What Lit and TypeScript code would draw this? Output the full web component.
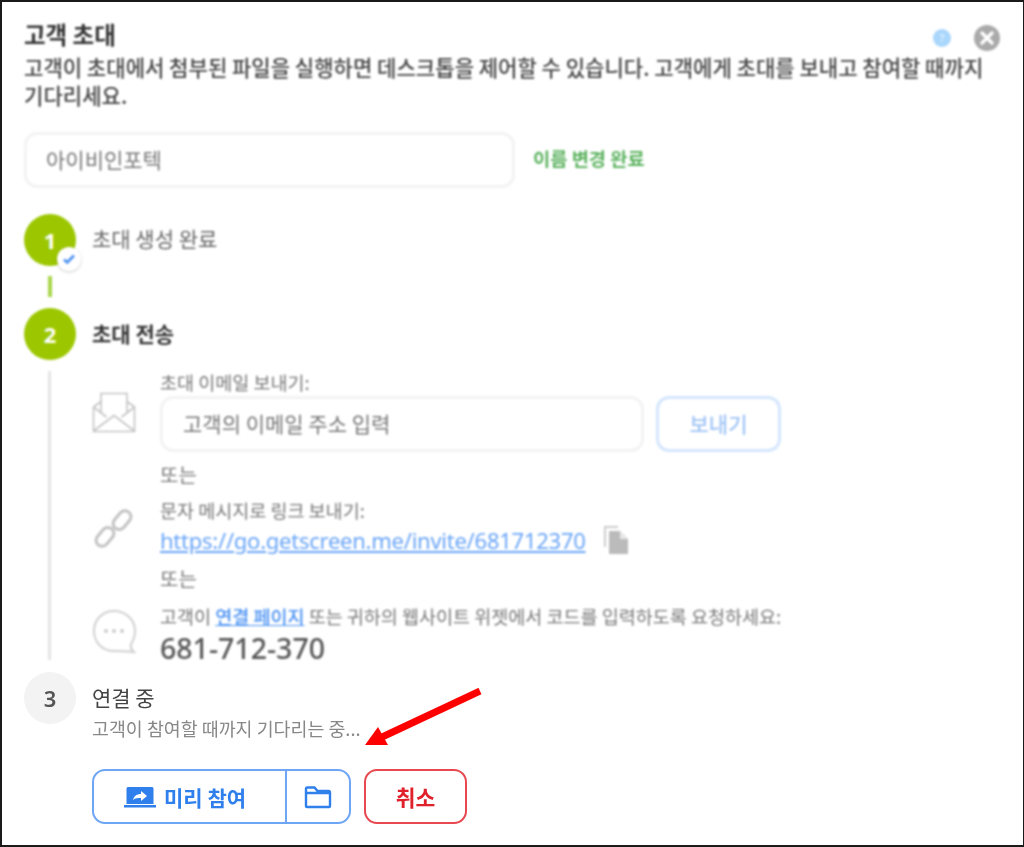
import { LitElement, html, css } from "lit";
import { customElement } from "lit/decorators.js";

@customElement("app-root")
export class AppRoot extends LitElement {
  static styles = css`
    :host { display: block; width: 1024px; height: 847px; font-family: "Noto Sans CJK KR", "Noto Sans", sans-serif; background: #fff; }
    .frame { position: relative; box-sizing: border-box; width: 1024px; height: 847px; border: 2px solid #1a1a1a; border-right-width: 1px; background: #fff; overflow: hidden; padding: 0 22px; }
    .soft { filter: blur(0.9px); }
    .lite { filter: blur(0.4px); }
    .top { height: 130px; }
    .title { font-size: 23.5px; font-weight: 700; color: #333; line-height: 28px; padding-top: 18px; }
    .desc { font-size: 21.07px; font-weight: 500; color: #444; line-height: 28px; margin-top: 5px; width: 965px; word-break: keep-all; }
    .help { position: absolute; left: 909px; top: 27px; width: 18px; height: 18px; border-radius: 50%; background: #a9d6fb; color: #d9eeff; font: 700 11px/18px "Noto Sans", sans-serif; text-align: center; }
    .close { position: absolute; left: 950px; top: 23px; width: 26px; height: 26px; }
    .name-row { display: flex; align-items: center; gap: 18px; }
    .field { box-sizing: border-box; border: 3px solid #f3f3f3; border-radius: 13px; display: flex; align-items: center; color: #777; font-weight: 400; padding-bottom: 2px; }
    .name { width: 491px; height: 56px; padding-left: 19px; font-size: 21px; }
    .saved { color: #5cb25f; font-size: 18.7px; font-weight: 700; margin-top: -5px; }
    .step { display: flex; gap: 16px; align-items: center; }
    .num { width: 52px; height: 52px; flex: none; border-radius: 50%; background: #9cc700; color: #fff; font: 700 22px/52px "Noto Sans", sans-serif; text-align: center; position: relative; }
    .num.off { background: #f3f3f3; color: #555; font-weight: 600; }
    .s1 { margin-top: 26px; }
    .s1 .label { color: #666; font-size: 21px; margin-top: -5px; }
    .badge { position: absolute; left: 33px; top: 33px; width: 24px; height: 24px; border-radius: 50%; background: #fff; box-shadow: 0 1px 3px #0003; display: flex; align-items: center; justify-content: center; }
    .link-short { width: 4px; height: 21px; background: #a9d64a; margin: 10px 0 11px 24px; }
    .s2 .label { font-weight: 700; color: #333; font-size: 21px; margin-top: -2px; }
    .body { display: flex; margin-top: 11px; }
    .rail { width: 3px; height: 289px; background: #e4e4e4; margin-left: 24px; flex: none; }
    .content { margin-left: 41px; margin-top: -1px; width: 720px; }
    .row { display: flex; gap: 24px; }
    .ico { width: 44px; flex: none; }
    .small { font-size: 18.5px; color: #777; line-height: 26px; margin-top: -1px; }
    .small.tight { line-height: 24px; }
    .email-line { display: flex; gap: 12px; margin-top: 1px; }
    .email { width: 484px; height: 56px; padding-left: 20px; font-size: 21px; }
    .send { box-sizing: border-box; width: 125px; height: 56px; border: 3px solid #d4e6fd; border-radius: 13px; color: #9fc3f5; font-size: 21px; font-weight: 500; display: flex; align-items: center; justify-content: center; padding-bottom: 2px; }
    .or { font-size: 20px; color: #777; line-height: 24px; margin-left: 68px; }
    .url-line { display: flex; align-items: center; gap: 17px; margin-top: 1px; }
    .url { font: 400 22px/34px "Noto Sans", sans-serif; letter-spacing: -0.25px; color: #69a5f7; text-decoration: underline; }
    .inline-link { color: #4a92f3; text-decoration: underline; font-weight: 500; }
    .code { font: 500 28.5px/36px "Noto Sans", sans-serif; color: #555; margin-top: 2px; }
    .s3 { align-items: flex-start; margin-top: 6px; }
    .s3 .label { color: #444; font-size: 21px; line-height: 28px; margin-top: 11px; }
    .s3 .sub { color: #888; font-size: 18.4px; line-height: 24px; margin-top: 5px; }
    .actions { display: flex; gap: 13px; margin: 29px 0 0 68px; }
    .group { box-sizing: border-box; width: 259px; height: 55px; border: 2px solid #6ea6f5; border-radius: 13px; display: flex; color: #2f80ed; }
    .join { box-sizing: border-box; width: 193px; padding-right: 9px; border-right: 2px solid #6ea6f5; display: flex; align-items: center; justify-content: center; gap: 8px; font-size: 21px; font-weight: 700; }
    .folder { flex: 1; display: flex; align-items: center; justify-content: center; }
    .cancel { box-sizing: border-box; width: 103px; height: 55px; border: 2px solid #e8484f; border-radius: 13px; color: #e0202a; font-size: 21.5px; font-weight: 700; display: flex; align-items: center; justify-content: center; }
    .arrow { position: absolute; left: 362px; top: 686px; }
  `;

  render() {
    return html`<div class="frame">
      <div class="soft">
        <div class="top">
          <div class="title">고객 초대</div>
          <div class="desc">고객이 초대에서 첨부된 파일을 실행하면 데스크톱을 제어할 수 있습니다. 고객에게 초대를 보내고 참여할 때까지 기다리세요.</div>
        </div>
        <div class="help">?</div>
        <svg class="close" viewBox="0 0 26 26"><circle cx="13" cy="13" r="13" fill="#aaa"/><path d="M8 8l10 10M18 8L8 18" stroke="#fff" stroke-width="3.4" stroke-linecap="round"/></svg>
        <div class="name-row">
          <div class="field name">아이비인포텍</div>
          <div class="saved">이름 변경 완료</div>
        </div>
        <div class="step s1">
          <div class="num">1
            <span class="badge"><svg width="14" height="12" viewBox="0 0 14 12"><path d="M2 6.5l3.2 3L12 2.5" fill="none" stroke="#4a8ff0" stroke-width="2.6"/></svg></span>
          </div>
          <div class="label">초대 생성 완료</div>
        </div>
        <div class="link-short"></div>
        <div class="step s2">
          <div class="num">2</div>
          <div class="label">초대 전송</div>
        </div>
        <div class="body">
          <div class="rail"></div>
          <div class="content">
            <div class="row">
              <div class="ico">
                <svg width="44" height="44" viewBox="0 0 44 44" style="margin-top:20px" fill="none" stroke="#c4c4c4" stroke-width="1.6"><path d="M1.5 17v24.5h41V17L35 11.500M1.5 17L9 11.500M1.5 41L22 25.500l20.500 15.500M1.500 17l13 10M42.500 17l-13 10M9 22V3.500h26V22"/></svg>
              </div>
              <div>
                <div class="small">초대 이메일 보내기:</div>
                <div class="email-line">
                  <div class="field email">고객의 이메일 주소 입력</div>
                  <div class="send">보내기</div>
                </div>
              </div>
            </div>
            <div class="or" style="margin-top:11px">또는</div>
            <div class="row" style="margin-top:12px">
              <div class="ico">
                <svg width="44" height="46" viewBox="0 0 44 46" style="margin-top:6px" fill="none" stroke="#c2c2c2" stroke-width="3"><rect x="-9" y="-6" width="21" height="12" rx="6" transform="translate(12 33) rotate(-50)"/><rect x="-12" y="-6" width="21" height="12" rx="6" transform="translate(31 14) rotate(-50)"/></svg>
              </div>
              <div>
                <div class="small tight">문자 메시지로 링크 보내기:</div>
                <div class="url-line">
                  <span class="url">https://go.getscreen.me/invite/681712370</span>
                  <svg width="27" height="30" viewBox="0 0 27 30"><path d="M2 22V2h13" fill="none" stroke="#ccc" stroke-width="2"/><path d="M6 6h11l8 8v15H6z" fill="#bbb"/><path d="M17 6v8h8" fill="#e8e8e8"/></svg>
                </div>
              </div>
            </div>
            <div class="or" style="margin-top:10px">또는</div>
            <div class="row" style="margin-top:14px">
              <div class="ico">
                <svg width="44" height="46" viewBox="0 0 44 46" style="margin-top:4px" fill="none" stroke="#d0d0d0" stroke-width="2"><path d="M22 2C11 2 2 10 2 22s9 20 20 20c6 0 10 0 20 1-4-3-4-6-2-10 2-3 3-7 3-11C43 10 33 2 22 2z"/><g fill="#ccc" stroke="none"><circle cx="14" cy="22" r="2"/><circle cx="22" cy="22" r="2"/><circle cx="30" cy="22" r="2"/></g></svg>
              </div>
              <div style="white-space:nowrap">
                <div class="small tight">고객이 <span class="inline-link">연결 페이지</span> 또는 귀하의 웹사이트 위젯에서 코드를 입력하도록 요청하세요:</div>
                <div class="code">681-712-370</div>
              </div>
            </div>
          </div>
        </div>
      </div>
      <div class="step s3 lite">
        <div class="num off">3</div>
        <div>
          <div class="label">연결 중</div>
          <div class="sub">고객이 참여할 때까지 기다리는 중...</div>
        </div>
      </div>
      <div class="actions lite">
        <div class="group">
          <div class="join">
            <svg width="32" height="22" viewBox="0 0 32 22"><path d="M4 1h24a1.500 1.500 0 0 1 1.500 1.500V18h-27V2.500A1.500 1.500 0 0 1 4 1z" fill="#2f80ed"/><rect x="0" y="19" width="32" height="2.500" fill="#2f80ed"/><path d="M9 14c1-4 4-6 8-6V5l6 5-6 5v-3c-3 0-6 0-8 2z" fill="#fff"/></svg>
            미리 참여
          </div>
          <div class="folder"><svg width="28" height="24" viewBox="0 0 28 24"><path d="M2 21V4a1.500 1.500 0 0 1 1.500-1.500h7L13.500 6H24.500A1.500 1.500 0 0 1 26 7.500V21a1 1 0 0 1-1 1H3a1 1 0 0 1-1-1zM2 8h24" fill="none" stroke="#2f80ed" stroke-width="2.400"/></svg></div>
        </div>
        <div class="cancel">취소</div>
      </div>
      <svg class="arrow" width="120" height="62" viewBox="0 0 120 62"><path d="M116 3L16 50" stroke="#f00" stroke-width="7"/><path d="M1 57L14 39 24 57z" fill="#f00"/></svg>
    </div>`;
  }
}
